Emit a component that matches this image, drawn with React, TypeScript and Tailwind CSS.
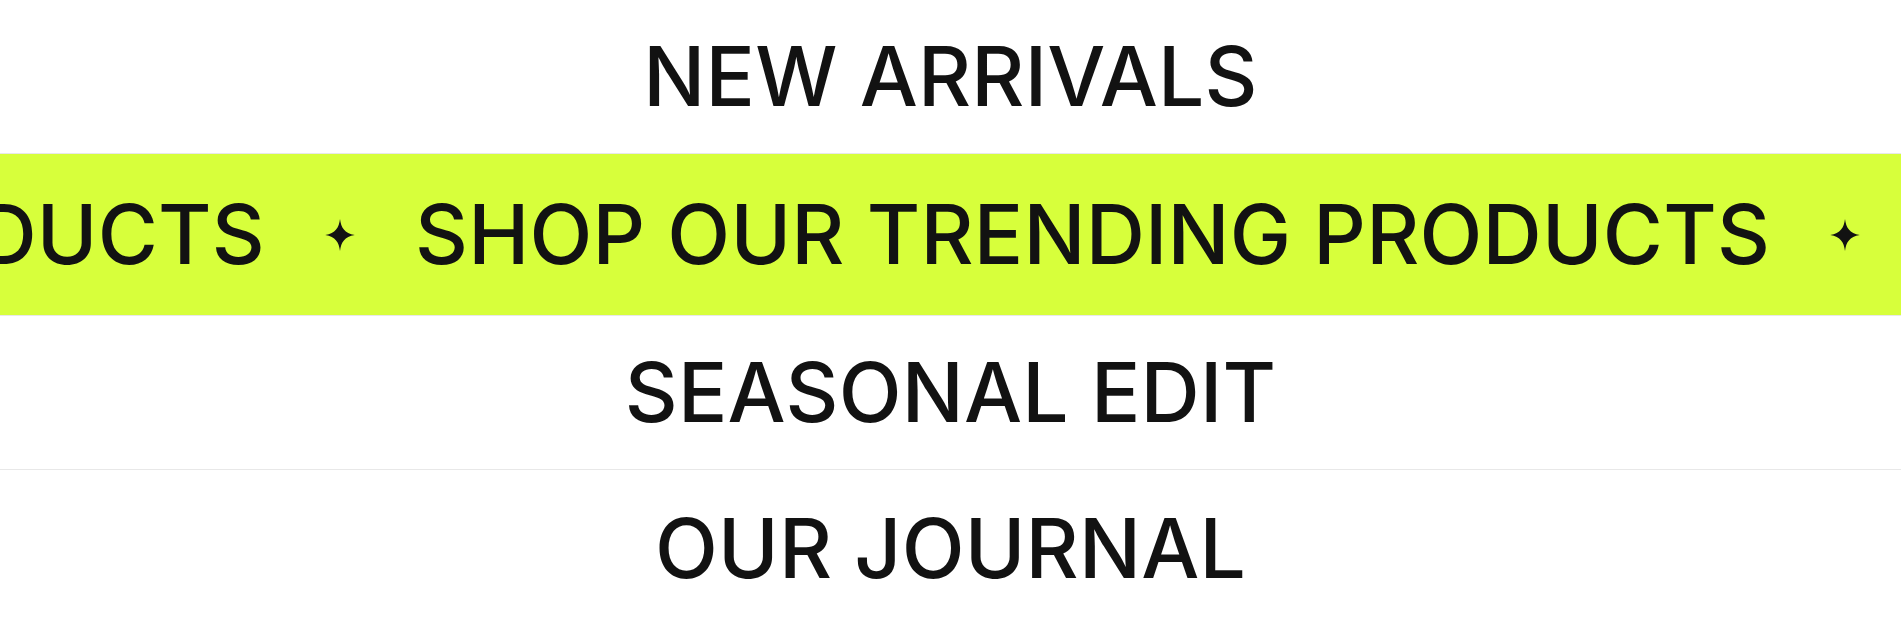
const font = { fontFamily: 'Inter, "Liberation Sans", sans-serif' };

function Sparkle() {
  return (
    <svg viewBox="0 0 24 26" className="w-[30px] h-[32px] shrink-0" fill="#121212">
      <path d="M12 0 C12.9 7 15.6 11.6 24 13 C15.6 14.4 12.9 19 12 26 C11.1 19 8.4 14.4 0 13 C8.4 11.6 11.1 7 12 0 Z" />
    </svg>
  );
}

function NavRow({ label, className = '' }: { label: string; className?: string }) {
  return (
    <div className={`flex items-center justify-center border-b border-[#e8e8e8] ${className}`}>
      <span className="text-[82px] leading-none font-medium tracking-[0.2px] text-[#121212] uppercase">{label}</span>
    </div>
  );
}

const marquee = 'SHOP OUR TRENDING PRODUCTS';

export default function App() {
  return (
    <div className="w-full bg-white" style={font}>
      <NavRow label="New Arrivals" className="h-[154px]" />
      <div className="h-[162px] bg-[#d7ff3b] border-b border-[#e8e8e8] overflow-hidden flex items-center">
        <div className="flex items-center gap-[60px] whitespace-nowrap text-[82px] leading-none font-medium tracking-[0.2px] text-[#121212]">
          {/* marquee caught mid-scroll: first copy ends near x=265 */}
          <div className="w-[265px] shrink-0 flex justify-end">
            <span>{marquee}</span>
          </div>
          <Sparkle />
          <span>{marquee}</span>
          <Sparkle />
          <span>{marquee}</span>
          <Sparkle />
        </div>
      </div>
      <NavRow label="Seasonal Edit" className="h-[154px]" />
      <NavRow label="Our Journal" className="h-[158px] border-b-0" />
    </div>
  );
}
